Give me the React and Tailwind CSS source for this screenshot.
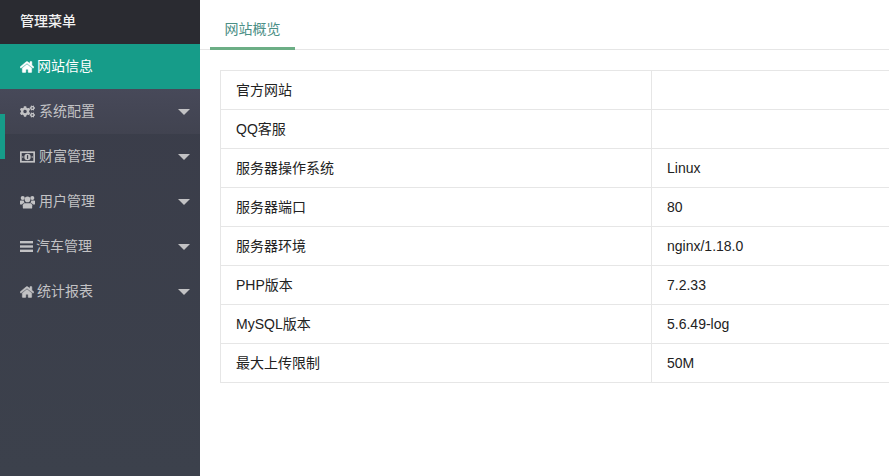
import React from "react";
import { FaHome, FaCogs } from "react-icons/fa";

const Money = () => (
  <svg width="16" height="12" viewBox="0 0 16 12" fill="none">
    <rect x="0.9" y="0.9" width="14.2" height="10.2" stroke="currentColor" strokeWidth="1.8" />
    <circle cx="8" cy="6" r="3.4" fill="currentColor" />
    <rect x="7.4" y="4" width="1.3" height="4" fill="#3a3d49" />
    <circle cx="3" cy="6" r="0.8" fill="currentColor" />
    <circle cx="13" cy="6" r="0.8" fill="currentColor" />
  </svg>
);

const Users = () => (
  <svg width="16" height="14" viewBox="0 0 16 14" fill="currentColor">
    <circle cx="8" cy="4.2" r="3" />
    <circle cx="2.9" cy="2.7" r="2.2" />
    <circle cx="13.1" cy="2.7" r="2.2" />
    <path d="M4 8.2h8l1 2.2V13q0 1-1 1H4q-1 0-1-1v-2.6z" />
    <path d="M0 6q0-.7.7-.7h3.2q.4 1.4 1 2.2Q3 7.8 2.3 9.7H.7Q0 9.7 0 9z" />
    <path d="M16 6q0-.7-.7-.7h-3.2q-.4 1.4-1 2.2 1.9.3 2.6 2.2h1.6q.7 0 .7-.7z" />
  </svg>
);

const Bars = () => (
  <svg width="13" height="11" viewBox="0 0 13 11" fill="currentColor">
    <rect x="0" y="0" width="13" height="2.4" />
    <rect x="0" y="4.3" width="13" height="2.4" />
    <rect x="0" y="8.6" width="13" height="2.4" />
  </svg>
);

const items = [
  { icon: <FaCogs size={17} />, label: "系统配置", cls: "bg-gradient-to-b from-[#474959] to-[#414350]", w: "w-[15px]", gap: "ml-[4px]" },
  { icon: <Money />, label: "财富管理", cls: "", w: "w-[15px]", gap: "ml-[4px]" },
  { icon: <Users />, label: "用户管理", cls: "", w: "w-[15px]", gap: "ml-[4px]" },
  { icon: <Bars />, label: "汽车管理", cls: "", w: "w-[13px]", gap: "ml-[3px]" },
  { icon: <FaHome size={14} stroke="currentColor" strokeWidth={20} />, label: "统计报表", cls: "", w: "w-[14px]", gap: "ml-[3px]" },
];

const rows = [
  ["官方网站", ""],
  ["QQ客服", ""],
  ["服务器操作系统", "Linux"],
  ["服务器端口", "80"],
  ["服务器环境", "nginx/1.18.0"],
  ["PHP版本", "7.2.33"],
  ["MySQL版本", "5.6.49-log"],
  ["最大上传限制", "50M"],
];

export default function App() {
  return (
    <div className="flex h-[476px] w-[889px] overflow-hidden bg-white font-['Liberation_Sans','Noto_Sans_CJK_SC',sans-serif] text-[14px]">
      <aside className="relative w-[200px] shrink-0 bg-gradient-to-b from-[#3a3c49] to-[#3c414c]">
        <div className="flex h-[44px] items-center bg-[#2a2b31] pb-[2px] pl-[20px] text-[14px] font-medium text-[#f2f2f2]">管理菜单</div>
        <div className="flex h-[45px] items-center bg-[#169c89] pl-[20px] text-white">
          <FaHome size={14} stroke="currentColor" strokeWidth={20} />
          <span className="ml-[3px]">网站信息</span>
        </div>
        {items.map((it) => (
          <div key={it.label} className={`flex h-[45px] items-center pl-[20px] pr-[10px] text-[#c2c2c4] ${it.cls}`}>
            <span className={`flex justify-center ${it.w}`}>{it.icon}</span>
            <span className={it.gap}>{it.label}</span>
            <span className="ml-auto h-0 w-0 border-x-[6px] border-t-[6px] border-x-transparent border-t-[#c2c2c4]" />
          </div>
        ))}
        <div className="absolute left-0 top-[114px] h-[45px] w-[5px] bg-[#169c89]" />
      </aside>
      <main className="min-w-0 flex-1">
        <div className="flex h-[50px] border-b border-[#e6e6e6] pl-[10px]">
          <div className="flex h-[50px] w-[85px] items-start justify-center border-b-[3px] border-[#6cae85] pt-[19px] text-[#4b8f86]">网站概览</div>
        </div>
        <div className="pl-[20px] pt-[20px]">
          <div className="w-[700px] border-t border-l border-[#e6e6e6] text-[#222]">
            {rows.map(([a, b]) => (
              <div key={a} className="flex h-[39px] border-b border-[#e6e6e6]">
                <div className="flex w-[431px] items-center border-r border-[#e6e6e6] pl-[15px]">{a}</div>
                <div className="flex items-center pl-[15px]">{b}</div>
              </div>
            ))}
          </div>
        </div>
      </main>
    </div>
  );
}
